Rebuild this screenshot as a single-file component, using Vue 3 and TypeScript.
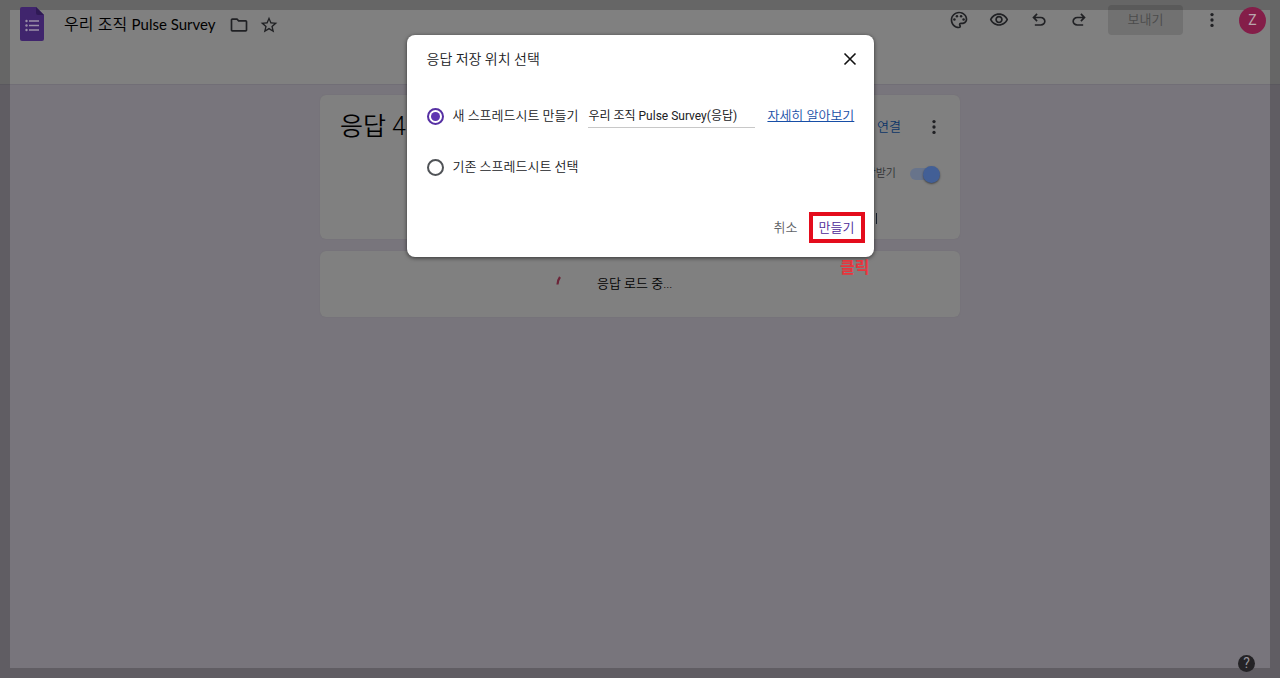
<script setup lang="ts">
import { ref } from 'vue'

const choice = ref<'new' | 'existing'>('new')
const sheetName = ref('우리 조직 Pulse Survey(응답)')
const accepting = ref(true)
</script>

<template>
  <div class="page">
    <header class="top">
      <svg class="logo" viewBox="0 0 24 34" aria-hidden="true">
        <path d="M2 0h14l8 8v24q0 2-2 2H2q-2 0-2-2V2q0-2 2-2z" fill="#40256d" />
        <path d="M16 0l8 8h-6q-2 0-2-2z" fill="#2f1a55" />
        <g fill="#9a90a8">
          <circle cx="6.5" cy="14" r="1.2" /><circle cx="6.5" cy="18.5" r="1.2" /><circle cx="6.5" cy="23" r="1.2" />
          <path d="M9 13.200h10v1.600H9zM9 17.700h10v1.600H9zM9 22.200h10v1.600H9z" />
        </g>
      </svg>
      <h1 class="doc">우리 조직 <span>Pulse Survey</span></h1>
      <button class="icon folder" aria-label="폴더로 이동">
        <svg viewBox="0 0 24 24"><path d="M9.17 6l2 2H20v10H4V6h5.17M10 4H4c-1.1 0-2 .9-2 2v12c0 1.1.9 2 2 2h16c1.1 0 2-.9 2-2V8c0-1.1-.9-2-2-2h-8l-2-2z" /></svg>
      </button>
      <button class="icon star" aria-label="별표">
        <svg viewBox="0 0 24 24"><path d="M22 9.24l-7.19-.62L12 2 9.19 8.63 2 9.24l5.46 4.73L5.82 21 12 17.27 18.18 21l-1.63-7.03L22 9.24zM12 15.4l-3.76 2.27 1-4.28-3.32-2.88 4.38-.38L12 6.1l1.71 4.04 4.38.38-3.32 2.88 1 4.28L12 15.4z" /></svg>
      </button>
      <div class="tools">
        <button class="icon" aria-label="테마 맞춤설정">
          <svg viewBox="0 0 24 24"><path d="M12 22C6.49 22 2 17.51 2 12S6.49 2 12 2s10 4.04 10 9c0 3.31-2.69 6-6 6h-1.77c-.28 0-.5.22-.5.5 0 .12.05.23.13.33.41.47.64 1.06.64 1.67A2.5 2.5 0 0 1 12 22zm0-18c-4.41 0-8 3.59-8 8s3.59 8 8 8c.28 0 .5-.22.5-.5a.54.54 0 0 0-.14-.35c-.41-.46-.63-1.05-.63-1.65a2.5 2.5 0 0 1 2.5-2.5H16c2.21 0 4-1.79 4-4 0-3.86-3.59-7-8-7z" /><circle cx="6.5" cy="11.5" r="1.5" /><circle cx="9.5" cy="7.5" r="1.5" /><circle cx="14.5" cy="7.5" r="1.5" /><circle cx="17.5" cy="11.5" r="1.5" /></svg>
        </button>
        <button class="icon" aria-label="미리보기">
          <svg viewBox="0 0 24 24"><path d="M12 6c3.79 0 7.17 2.13 8.82 5.5C19.17 14.87 15.79 17 12 17s-7.17-2.13-8.82-5.5C4.83 8.13 8.21 6 12 6m0-2C7 4 2.73 7.11 1 11.5 2.73 15.89 7 19 12 19s9.27-3.11 11-7.5C21.27 7.11 17 4 12 4zm0 5a2.5 2.5 0 0 1 0 5 2.5 2.5 0 0 1 0-5m0-2c-2.48 0-4.5 2.02-4.5 4.5S9.52 16 12 16s4.5-2.02 4.5-4.5S14.48 7 12 7z" /></svg>
        </button>
        <button class="icon" aria-label="실행취소">
          <svg viewBox="0 0 24 24"><path d="M7 19v-2h7.1q1.575 0 2.738-1T18 13.500 16.838 11 14.1 10H7.800l2.600 2.600L9 14 4 9l5-5 1.400 1.400L7.800 8h6.300q2.425 0 4.163 1.575T20 13.500t-1.737 3.925T14.100 19z" /></svg>
        </button>
        <button class="icon" aria-label="다시 실행">
          <svg viewBox="0 0 24 24"><path d="M17 19v-2H9.900q-1.575 0-2.738-1T6 13.500 7.162 11 9.900 10h6.300l-2.600 2.600L15 14l5-5-5-5-1.400 1.400L16.200 8H9.900q-2.425 0-4.163 1.575T4 13.500t1.737 3.925T9.900 19z" /></svg>
        </button>
        <button class="send" disabled>보내기</button>
        <button class="icon" aria-label="더보기">
          <svg viewBox="0 0 24 24"><circle cx="12" cy="5.500" r="2" /><circle cx="12" cy="12" r="2" /><circle cx="12" cy="18.500" r="2" /></svg>
        </button>
        <button class="avatar">Z</button>
      </div>
    </header>

    <main class="content">
      <section class="card summary">
        <h2>응답 4</h2>
        <div class="side">
          <div class="line link-line">
            <a class="connect" href="#">연결</a>
            <button class="icon" aria-label="응답 옵션">
              <svg viewBox="0 0 24 24"><circle cx="12" cy="5.500" r="2" /><circle cx="12" cy="12" r="2" /><circle cx="12" cy="18.500" r="2" /></svg>
            </button>
          </div>
          <label class="line accept">답받기<input v-model="accepting" type="checkbox" role="switch" /></label>
        </div>
        <span class="tab-mark"></span>
      </section>
      <section class="card loading">
        <svg class="spinner" viewBox="0 0 28 28" aria-hidden="true"><path d="M4.500 14.500q0-4 2.500-7.500" fill="none" stroke="#6c2438" stroke-width="2.200" /></svg>
        <span>응답 로드 중...</span>
      </section>
    </main>

    <div class="frame"></div>
    <button class="help" aria-label="도움말">?</button>

    <div class="modal-layer">
      <form class="dialog" role="dialog" aria-labelledby="dialog-title" @submit.prevent>
        <div class="dialog-head">
          <h2 id="dialog-title">응답 저장 위치 선택</h2>
          <button class="close" type="button" aria-label="닫기">
            <svg viewBox="0 0 14 14"><path d="M1.500 1.500l11 11M12.500 1.500l-11 11" fill="none" stroke="#111" stroke-width="1.600" /></svg>
          </button>
        </div>
        <div class="option">
          <label><input v-model="choice" type="radio" name="target" value="new" />새 스프레드시트 만들기</label>
          <input v-model="sheetName" class="name" type="text" aria-label="스프레드시트 이름" />
          <a href="#">자세히 알아보기</a>
        </div>
        <div class="option">
          <label><input v-model="choice" type="radio" name="target" value="existing" />기존 스프레드시트 선택</label>
        </div>
        <div class="actions">
          <button class="cancel" type="button">취소</button>
          <button class="create" type="submit">만들기</button>
        </div>
        <span class="note">클릭</span>
      </form>
    </div>
  </div>
</template>

<style>
body { margin: 0; }
</style>

<style scoped>
* { box-sizing: border-box; }
.page {
  position: relative;
  min-height: 100vh;
  background: #78757c;
  color: #000;
  font: 350 13px/20px Roboto, "Noto Sans CJK KR", sans-serif;
}
button { padding: 0; border: 0; background: none; font: inherit; }
h1, h2 { margin: 0; font-weight: inherit; }
svg { display: block; }
.top {
  display: flex;
  align-items: flex-start;
  height: 85px;
  padding: 7px 14px 0 20px;
  background: #808080;
  border-bottom: 1px solid #716e76;
}
.logo { position: relative; z-index: 2; width: 24px; height: 34px; }
.doc { margin-left: 20px; font: 350 16px/34px Lato, "Noto Sans CJK KR", sans-serif; white-space: nowrap; }
.doc span { font-size: 15px; font-weight: 400; }
.icon { width: 20px; height: 20px; }
.icon svg { width: 100%; height: 100%; fill: #202124; }
.folder { margin: 8px 0 0 14px; }
.star { margin: 8px 0 0 10px; }
.tools { display: flex; align-items: flex-start; gap: 20px; margin-left: auto; padding-top: 3px; }
.send {
  width: 75px;
  height: 30px;
  margin: -5px -1px 0 -1px;
  border-radius: 4px;
  background: #717171;
  color: #4b4b4b;
}
.avatar {
  position: relative;
  z-index: 2;
  width: 27px;
  height: 27px;
  margin: -3px 0 0 -3px;
  border-radius: 50%;
  background: #841e49;
  color: #b9a6ad;
  font: 14px/27px Roboto, sans-serif;
}
.content { width: 50%; margin: 10px auto 0; }
.card { border-radius: 6px; background: #808080; box-shadow: 0 0 1px #6c6a70; }
.summary {
  position: relative;
  display: flex;
  justify-content: space-between;
  height: 144px;
  padding: 16px 16px 0 20px;
}
.summary h2 { font-size: 25px; line-height: 32px; }
.side { display: flex; flex-direction: column; align-items: flex-end; gap: 27px; }
.line { display: flex; align-items: center; }
.link-line { gap: 23px; margin-top: 6px; }
.connect { color: #0d3668; text-decoration: none; }
.accept { gap: 14px; margin-right: 4px; color: #303134; font-size: 11px; }
.accept input {
  position: relative;
  appearance: none;
  width: 30px;
  height: 12px;
  margin: 0;
  border-radius: 6px;
  background: #68748b;
}
.accept input::after {
  content: "";
  position: absolute;
  right: 0;
  top: -2px;
  width: 17px;
  height: 17px;
  border-radius: 50%;
  background: #425f96;
  box-shadow: 0 1px 2px #444;
}
.tab-mark { position: absolute; right: 83px; top: 118px; width: 1px; height: 11px; background: #16202d; }
.loading { display: flex; align-items: center; height: 66px; margin-top: 12px; padding-left: 233px; }
.spinner { width: 28px; height: 28px; margin-right: 16px; }
.frame { position: absolute; inset: 0; border: 10px solid rgba(0, 0, 0, 0.2); pointer-events: none; }
.help {
  position: absolute;
  right: 25px;
  bottom: 6px;
  width: 17px;
  height: 17px;
  border-radius: 50%;
  background: #242326;
  color: #96939a;
  font: 14px/17px Roboto, sans-serif;
}
.modal-layer {
  position: absolute;
  inset: 0;
  z-index: 3;
  display: flex;
  justify-content: center;
  align-items: flex-start;
  padding-top: 35px;
}
.dialog {
  position: relative;
  width: 467px;
  padding: 14px 9px 14px 20px;
  border-radius: 8px;
  background: #fff;
  color: #202124;
  box-shadow: 0 1px 4px rgba(0, 0, 0, 0.6);
}
.dialog-head { display: flex; align-items: center; justify-content: space-between; padding-right: 8px; }
.dialog-head h2 { font-size: 14px; line-height: 20px; }
.close { width: 14px; height: 14px; }
.option { display: flex; align-items: center; height: 24px; margin-top: 35px; white-space: nowrap; }
.option + .option { margin-top: 27px; }
.option label { display: flex; align-items: center; gap: 9px; }
.option input[type="radio"] {
  appearance: none;
  display: grid;
  place-items: center;
  width: 17px;
  height: 17px;
  margin: 0;
  border: 2px solid #505357;
  border-radius: 50%;
}
.option input[type="radio"]:checked { border-color: #5630a3; }
.option input[type="radio"]:checked::after {
  content: "";
  width: 9px;
  height: 9px;
  border-radius: 50%;
  background: #5e35b1;
}
.name {
  width: 167px;
  height: 24px;
  margin: 0 12px 0 10px;
  padding: 0 0 2px;
  border: 0;
  border-bottom: 1px solid #c8c8c8;
  background: none;
  color: #202124;
  font: 12px/20px Roboto, "Noto Sans CJK KR", sans-serif;
}
.option a { color: #174ea6; text-decoration: underline; }
.actions { display: flex; justify-content: flex-end; align-items: center; gap: 11px; margin-top: 33px; }
.cancel { color: #5f6368; }
.create { width: 56px; height: 31px; border: 4px solid #e40c1c; color: #4d2a98; }
.note {
  position: absolute;
  top: 223px;
  right: 4px;
  color: #e7353d;
  font-size: 16px;
  font-weight: 700;
}
</style>
